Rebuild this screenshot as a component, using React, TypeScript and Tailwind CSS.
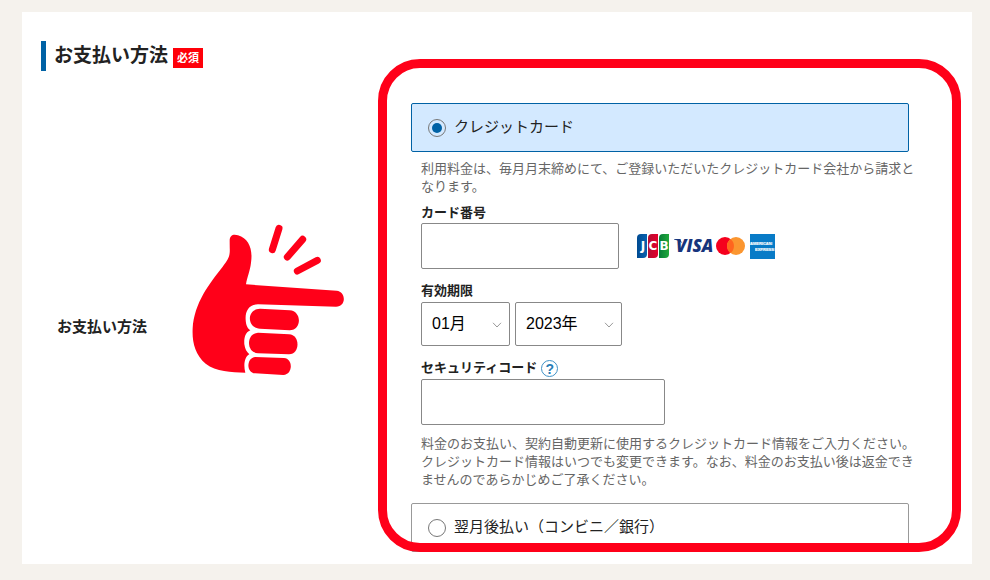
import { useState } from 'react';
import type { ReactNode } from 'react';

type PaymentMethod = 'credit' | 'deferred';

const MONTHS = [1, 2, 3, 4, 5, 6, 7, 8, 9, 10, 11, 12];
const YEARS = [2023, 2024, 2025, 2026, 2027, 2028, 2029, 2030];

interface MethodOptionProps {
  value: PaymentMethod;
  selected: PaymentMethod;
  onSelect: (value: PaymentMethod) => void;
  children: ReactNode;
}

function MethodOption({
  value,
  selected,
  onSelect,
  children,
}: MethodOptionProps) {
  const isSelected = value === selected;

  return (
    <label
      className={`flex h-[49px] items-center gap-2 rounded-xs border px-4 text-[15px] ${
        isSelected ? 'border-[#0062a5] bg-[#d3e9ff]' : 'border-[#999999] bg-white'
      }`}
    >
      <input
        type="radio"
        name="payment"
        value={value}
        checked={isSelected}
        onChange={() => onSelect(value)}
        className="grid size-[18px] shrink-0 appearance-none place-items-center rounded-full border border-[#777777] bg-white before:size-[10px] before:rounded-full checked:bg-[#d3e9ff] checked:before:bg-[#0062a5]"
      />
      {children}
    </label>
  );
}

interface DateSelectProps {
  label: string;
  options: string[];
  className: string;
}

function DateSelect({ label, options, className }: DateSelectProps) {
  return (
    <div className={`relative ${className}`}>
      <select
        aria-label={label}
        className="h-11 w-full appearance-none rounded-xs border border-[#888888] bg-white pl-[10px] text-base text-black"
      >
        {options.map((option) => (
          <option key={option}>{option}</option>
        ))}
      </select>
      <svg
        viewBox="0 0 10 6"
        className="pointer-events-none absolute top-5 right-2 h-[6px] w-[10px]"
        fill="none"
        stroke="#999999"
      >
        <path d="M1 0.8 5 5 9 0.8" />
      </svg>
    </div>
  );
}

function CardBrands() {
  return (
    <svg
      viewBox="0 0 140 26"
      className="h-[26px] w-[140px] shrink-0"
      role="img"
      aria-label="JCB VISA Mastercard American Express"
    >
      <defs>
        <linearGradient id="jcbBlue">
          <stop offset="0" stopColor="#004a91" />
          <stop offset="1" stopColor="#0863b0" />
        </linearGradient>
        <linearGradient id="jcbRed">
          <stop offset="0" stopColor="#b20f32" />
          <stop offset="1" stopColor="#e5002d" />
        </linearGradient>
        <linearGradient id="jcbGreen">
          <stop offset="0" stopColor="#087d38" />
          <stop offset="1" stopColor="#20a93b" />
        </linearGradient>
      </defs>

      {/* JCB */}
      <path d="M4 1H10V21Q10 25 6 25H0V5Q0 1 4 1Z" fill="url(#jcbBlue)" />
      <path d="M15 1H21V21Q21 25 17 25H11V5Q11 1 15 1Z" fill="url(#jcbRed)" />
      <path d="M26 1H32V21Q32 25 28 25H22V5Q22 1 26 1Z" fill="url(#jcbGreen)" />
      <g
        fill="white"
        fontFamily="DejaVu Sans, sans-serif"
        fontSize="12"
        fontWeight="bold"
        textAnchor="middle"
      >
        <text x="6" y="17">J</text>
        <text x="16" y="17">C</text>
        <text x="27" y="17">B</text>
      </g>

      {/* VISA */}
      <path d="M37 6H43L45 10Q42 7 37 6.5Z" fill="#17347c" />
      <text
        x="39"
        y="19"
        fill="#17347c"
        fontFamily="Open Sans, sans-serif"
        fontSize="17"
        fontStyle="italic"
        fontWeight="800"
      >
        VISA
      </text>

      {/* Mastercard */}
      <circle cx="88" cy="13" r="9" fill="#f5001d" />
      <circle cx="99" cy="13" r="9" fill="#fb9630" />
      <path d="M93.5 5.9a9 9 0 0 1 0 14.2a9 9 0 0 1 0-14.2Z" fill="#ff651e" />

      {/* American Express */}
      <rect x="113" y="1" width="25" height="25" fill="#087bc7" />
      <path d="M113 9H136V12H113ZM118 15H138V18H118Z" fill="white" opacity="0.3" />
      <g
        fill="white"
        fontFamily="Liberation Sans, sans-serif"
        fontWeight="bold"
      >
        <text x="113" y="12" fontSize="4">AMERICAN</text>
        <text x="118" y="18" fontSize="4">EXPRESS</text>
      </g>
    </svg>
  );
}

function PointingHand() {
  return (
    <svg viewBox="30 21 474 468" className="h-[156px] w-[158px]" aria-hidden="true">
      <g fill="#ff0019">
        <path d="M149 77C149 60 161 56 174 61C207 71 219 103 213 143C210 169 201 187 198 208L470 227C498 229 500 275 468 275L234 268C206 268 195 289 197 315C198 332 203 340 211 346C193 353 192 375 193 388C195 402 200 411 208 418C193 426 190 451 196 473C154 471 108 470 77 446C44 418 36 379 38 340C43 263 88 206 128 155C154 121 149 119 149 77Z" />
        <path d="M240 281L329 286C366 288 366 346 329 346L240 341C200 340 199 282 240 281Z" />
        <path d="M234 353L327 358C361 360 361 417 327 418L234 415C198 412 198 356 234 353Z" />
        <path d="M226 426L312 429C340 431 339 479 310 480L225 475C198 473 199 428 226 426Z" />
      </g>
      <g stroke="#ff0019" strokeWidth="21" strokeLinecap="round">
        <path d="M297 40 277 104" />
        <path d="M368 73 322 126" />
        <path d="M412 136 352 168" />
      </g>
    </svg>
  );
}

export default function App() {
  const [method, setMethod] = useState<PaymentMethod>('credit');

  return (
    <main className="min-h-screen bg-[#f5f2ed] pt-3 pr-[18px] pb-[17px] pl-[22px] font-['Liberation_Sans','Noto_Sans_CJK_JP',sans-serif] text-[#222222]">
      <section className="bg-white pt-[29px] pb-3">
        <div className="ml-[19px] flex h-[30px] items-center gap-[5px] border-l-5 border-[#0062a5] pl-2">
          <h1 className="text-[19px] leading-[30px] font-bold">お支払い方法</h1>
          <span className="mt-1 bg-[#ff0009] px-1 text-[11px] leading-5 font-bold text-white">
            必須
          </span>
        </div>

        <div className="mt-8 mr-[63px] ml-[35px] grid grid-cols-[354px_minmax(0,1fr)] items-center">
          <h2 className="text-[15px] font-bold">お支払い方法</h2>

          <form className="relative">
            <MethodOption value="credit" selected={method} onSelect={setMethod}>
              クレジットカード
            </MethodOption>

            <div className="px-[10px] text-[13px] leading-[18px] whitespace-nowrap">
              <p className="mt-2 text-[#666666]">
                利用料金は、毎月月末締めにて、ご登録いただいたクレジットカード会社から請求と
                <br />
                なります。
              </p>

              <label htmlFor="card-number" className="mt-2 block font-bold">
                カード番号
              </label>
              <div className="mt-px flex items-center gap-[18px]">
                <input
                  id="card-number"
                  type="text"
                  inputMode="numeric"
                  className="h-[46px] w-[198px] rounded-xs border border-[#888888] px-3 text-base"
                />
                <CardBrands />
              </div>

              <fieldset className="mt-[13px]">
                <legend className="font-bold">有効期限</legend>
                <div className="mt-[2px] flex gap-[5px]">
                  <DateSelect
                    label="有効期限（月）"
                    options={MONTHS.map((m) => `${String(m).padStart(2, '0')}月`)}
                    className="w-[89px]"
                  />
                  <DateSelect
                    label="有効期限（年）"
                    options={YEARS.map((y) => `${y}年`)}
                    className="w-[107px]"
                  />
                </div>
              </fieldset>

              <div className="mt-[13px] flex items-center gap-1">
                <label htmlFor="security-code" className="font-bold">
                  セキュリティコード
                </label>
                <button
                  type="button"
                  aria-label="セキュリティコードとは"
                  className="grid size-[17px] place-items-center rounded-full border border-[#3f91c6] text-sm leading-4 font-bold text-[#287db7]"
                >
                  ?
                </button>
              </div>
              <input
                id="security-code"
                type="text"
                inputMode="numeric"
                className="mt-[2px] block h-[46px] w-[244px] rounded-xs border border-[#888888] px-3 text-base"
              />

              <p className="mt-[10px] mb-[14px] text-[#666666]">
                料金のお支払い、契約自動更新に使用するクレジットカード情報をご入力ください。
                <br />
                クレジットカード情報はいつでも変更できます。なお、料金のお支払い後は返金でき
                <br />
                ませんのであらかじめご了承ください。
              </p>
            </div>

            <MethodOption value="deferred" selected={method} onSelect={setMethod}>
              翌月後払い（コンビニ／銀行）
            </MethodOption>

            {/* Callout frame and pointer */}
            <div className="pointer-events-none absolute -top-11 -right-[52px] bottom-0 -left-[33px] rounded-[42px] border-9 border-[#ff0019]" />
            <div className="pointer-events-none absolute top-[119px] -left-[221px]">
              <PointingHand />
            </div>
          </form>
        </div>
      </section>
    </main>
  );
}
